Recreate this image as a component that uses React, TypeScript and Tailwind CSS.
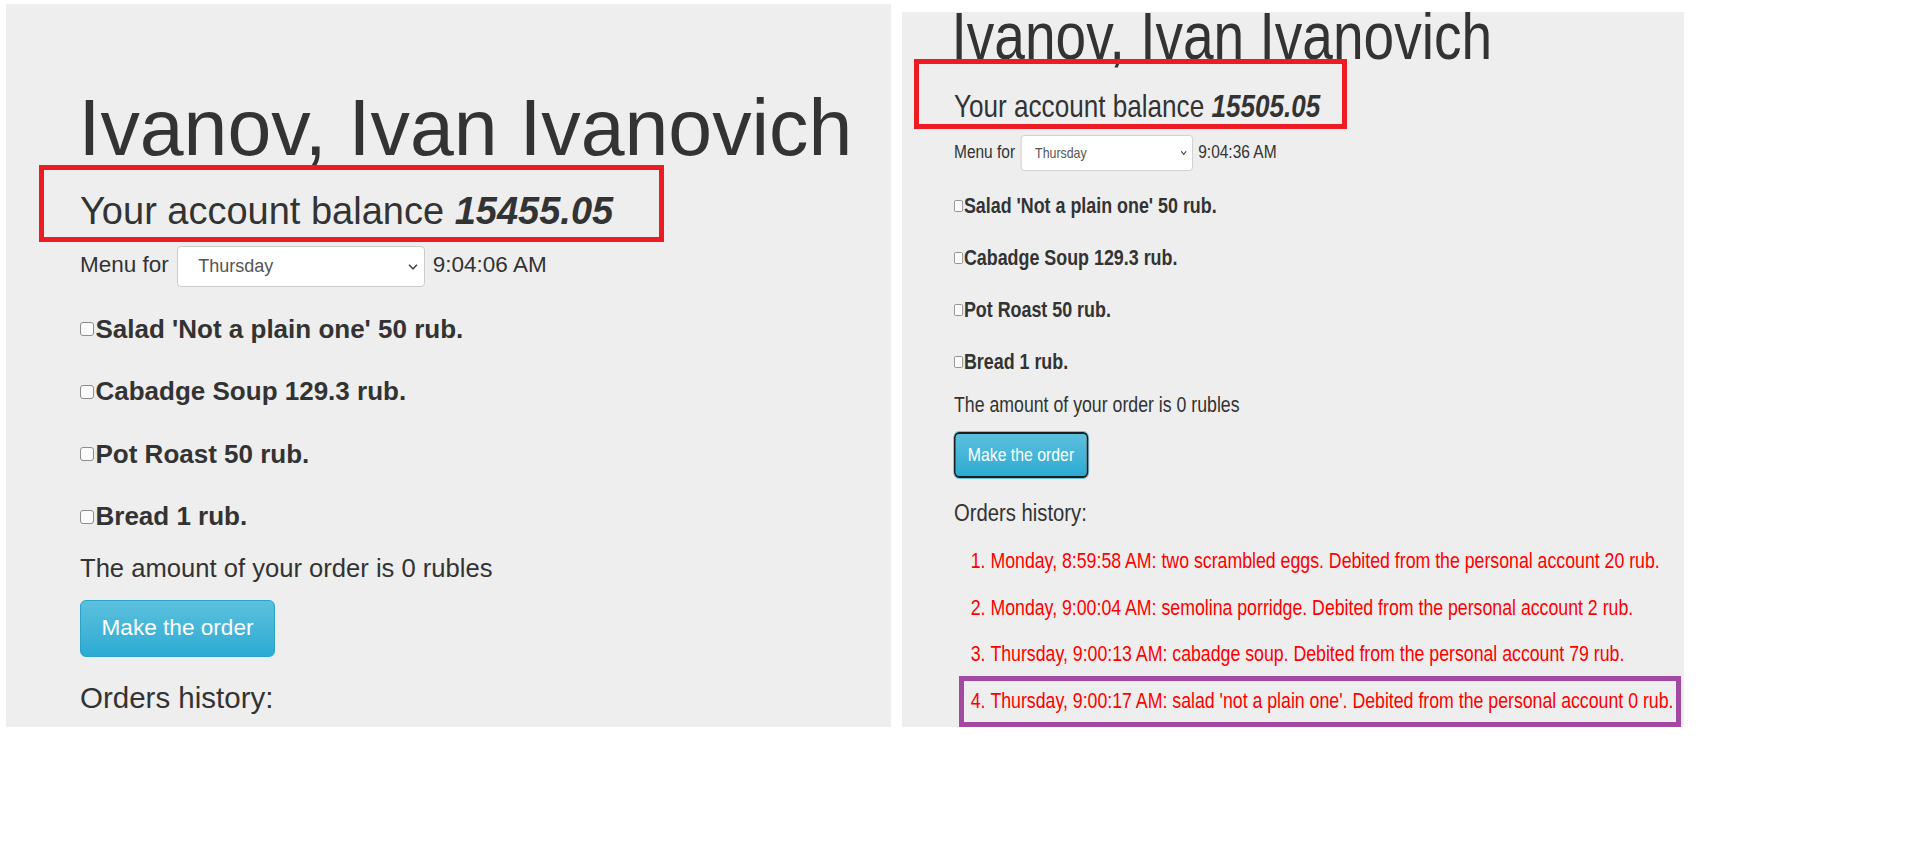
import React from 'react';

interface Sizes {
  panel: string;
  inner: string;
  heading: string;
  balance: string;
  row: string;
  label: string;
  selectWrap: string;
  select: string;
  chevron: string;
  items: string;
  item: string;
  checkbox: string;
  amount: string;
  button: string;
  history: string;
  list: string;
  li: string;
}

// left shot: page at full size
const big: Sizes = {
  panel: 'w-[885px] h-[723px] mt-[4px] pl-[74px] pt-[85px]',
  inner: 'w-[800px]',
  heading: 'ml-[-1.5px] text-[78.8px] leading-[78.8px]',
  balance: 'mt-[23.5px] text-[38px] leading-[40px]',
  row: 'mt-[15px] gap-[8px]',
  label: 'mt-[5.5px] text-[22.5px] leading-[26px]',
  selectWrap: 'w-[248px] h-[41px]',
  select: 'pl-[20.5px] text-[18px] rounded-[4px]',
  chevron: 'right-[7px] w-[10px] h-[7px]',
  items: 'mt-[26.3px] gap-[32.5px]',
  item: 'text-[26px] leading-[30px] gap-[1.5px]',
  checkbox: 'mt-[8.7px] w-[14px] h-[14px] rounded-[3px]',
  amount: 'mt-[22.3px] text-[25.6px] leading-[30px]',
  button: 'mt-[16.2px] w-[195px] h-[57px] text-[22.6px] rounded-[6px] border border-[#28a4c9]',
  history: 'mt-[24.1px] text-[29.5px] leading-[34px]',
  list: 'mt-[20.7px] gap-[20.7px] pl-[20.3px]',
  li: 'text-[25.6px] leading-[30px]',
};

// right shot: smaller and squeezed sideways
const small: Sizes = {
  panel: 'w-[782px] h-[715px] mt-[12px] ml-[11px] pl-[52px]',
  inner: 'w-[900px] origin-top-left scale-x-[0.824]',
  heading: 'mt-[-9.25px] ml-[-3px] text-[66.8px] leading-[66.8px]',
  balance: 'mt-[19.2px] text-[31.7px] leading-[34px]',
  row: 'mt-[12.3px] gap-[6.8px]',
  label: 'mt-[5.8px] text-[18.8px] leading-[22px]',
  selectWrap: 'w-[208.7px] h-[36px]',
  select: 'pl-[16.5px] text-[15px] rounded-[4px]',
  chevron: 'right-[7px] w-[7.5px] h-[5.5px]',
  items: 'mt-[21.8px] gap-[26px]',
  item: 'text-[21.7px] leading-[26px] gap-[1px]',
  checkbox: 'mt-[7.2px] w-[11px] h-[11.7px] rounded-[2px]',
  amount: 'mt-[17.5px] text-[21.5px] leading-[26px]',
  button:
    'mt-[13.45px] w-[162.6px] h-[46.6px] text-[19.2px] rounded-[6px] border-2 border-[#1e1e1e] shadow-[0_0_0_1px_#6cc4e0]',
  history: 'mt-[20.9px] text-[24.6px] leading-[28px]',
  list: 'mt-[20.7px] gap-[20.7px] pl-[20.3px]',
  li: 'text-[21.5px] leading-[26px]',
};

const menu = [
  "Salad 'Not a plain one' 50 rub.",
  'Cabadge Soup 129.3 rub.',
  'Pot Roast 50 rub.',
  'Bread 1 rub.',
];

const orders = [
  'Monday, 8:59:58 AM: two scrambled eggs. Debited from the personal account 20 rub.',
  'Monday, 9:00:04 AM: semolina porridge. Debited from the personal account 2 rub.',
  'Thursday, 9:00:13 AM: cabadge soup. Debited from the personal account 79 rub.',
  "Thursday, 9:00:17 AM: salad 'not a plain one'. Debited from the personal account 0 rub.",
];

function CabinetPage({
  s,
  balance,
  time,
  showHistory,
}: {
  s: Sizes;
  balance: string;
  time: string;
  showHistory: boolean;
}) {
  return (
    <div className={`${s.panel} shrink-0 bg-[#eeeeee] overflow-hidden text-[#333333]`}>
      <div className={s.inner}>
        <h1 className={`${s.heading} whitespace-nowrap`}>Ivanov, Ivan Ivanovich</h1>
        <h2 className={`${s.balance} whitespace-nowrap`}>
          Your account balance <b className="italic font-bold">{balance}</b>
        </h2>

        <div className={`${s.row} flex items-start`}>
          <span className={`${s.label} whitespace-nowrap`}>Menu for</span>
          <div className={`${s.selectWrap} relative shrink-0`}>
            <select
              defaultValue="Thursday"
              className={`${s.select} w-full h-full appearance-none bg-white border border-[#cccccc] text-[#555555] outline-none`}
            >
              <option>Monday</option>
              <option>Tuesday</option>
              <option>Wednesday</option>
              <option>Thursday</option>
              <option>Friday</option>
            </select>
            <svg
              viewBox="0 0 10 7"
              className={`${s.chevron} absolute top-1/2 -translate-y-1/2 pointer-events-none`}
              fill="none"
            >
              <path d="M1 1.2 L5 5.4 L9 1.2" stroke="#4a4a4a" strokeWidth="1.6" />
            </svg>
          </div>
          <span className={`${s.label} whitespace-nowrap`}>{time}</span>
        </div>

        <div className={`${s.items} flex flex-col`}>
          {menu.map((dish) => (
            <label key={dish} className={`${s.item} flex items-start font-bold whitespace-nowrap`}>
              <input
                type="checkbox"
                className={`${s.checkbox} shrink-0 appearance-none bg-[#fbfbfb] border border-[#8d8d8d]`}
              />
              <span>{dish}</span>
            </label>
          ))}
        </div>

        <p className={`${s.amount} whitespace-nowrap`}>The amount of your order is 0 rubles</p>

        <button
          type="button"
          className={`${s.button} flex items-center justify-center text-white bg-gradient-to-b from-[#5bc0de] to-[#2aabd2]`}
        >
          Make the order
        </button>

        <h3 className={`${s.history} whitespace-nowrap`}>Orders history:</h3>

        {showHistory && (
          <ol className={`${s.list} flex flex-col list-decimal list-inside text-[#ff0000]`}>
            {orders.map((o) => (
              <li key={o} className={`${s.li} whitespace-nowrap`}>
                {o}
              </li>
            ))}
          </ol>
        )}
      </div>
    </div>
  );
}

export default function App() {
  return (
    <div className="relative w-[1914px] h-[858px] bg-white overflow-hidden font-['Liberation_Sans',Arial,Helvetica,sans-serif]">
      <div className="flex items-start pl-[6px]">
        <CabinetPage s={big} balance="15455.05" time="9:04:06 AM" showHistory={false} />
        <CabinetPage s={small} balance="15505.05" time="9:04:36 AM" showHistory={true} />
      </div>

      {/* markup drawn over the screenshots */}
      <div className="absolute left-[39px] top-[165px] w-[625px] h-[77px] border-[5px] border-[#ed1c24] pointer-events-none" />
      <div className="absolute left-[914px] top-[59px] w-[433px] h-[70px] border-[5px] border-[#ed1c24] pointer-events-none" />
      <div className="absolute left-[959px] top-[676px] w-[722px] h-[51px] border-[5px] border-[#a349a4] pointer-events-none" />
    </div>
  );
}
